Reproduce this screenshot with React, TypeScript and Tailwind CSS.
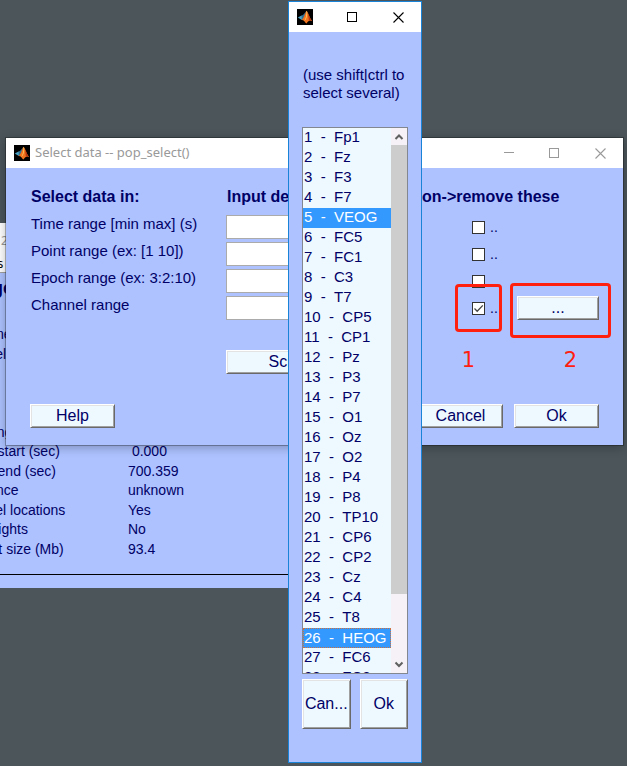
import React from "react";

const CHANNELS = [
  "Fp1", "Fz", "F3", "F7", "VEOG", "FC5", "FC1", "C3", "T7", "CP5", "CP1", "Pz", "P3", "P7",
  "O1", "Oz", "O2", "P4", "P8", "TP10", "CP6", "CP2", "Cz", "C4", "T8", "HEOG", "FC6", "FC2",
];

const INFO: [string, string][] = [
  ["Filename", ""],
  ["Channels per frame", ""],
  ["\u00a0", ""],
  ["\u00a0", ""],
  ["\u00a0", ""],
  ["Sampling rate (Hz)", ""],
  ["Epoch start (sec)", "\u00a00.000"],
  ["Epoch end (sec)", "700.359"],
  ["Reference", "unknown"],
  ["Channel locations", "Yes"],
  ["ICA weights", "No"],
  ["Dataset size (Mb)", "93.4"],
];

const RANGES = [
  "Time range [min max] (s)",
  "Point range (ex: [1 10])",
  "Epoch range (ex: 3:2:10)",
  "Channel range",
];

function MatlabIcon() {
  return (
    <svg viewBox="0 0 16 16" className="size-4 shrink-0" aria-hidden="true">
      <rect width="16" height="16" fill="#000" />
      <path d="M0.8 8.4 L4.6 6.6 L6.4 8.2 L4.8 11 Z" fill="#4aa3c4" />
      <path d="M4.6 6.6 C6.5 6 7.5 4 9 2.4 L7.6 8 L4.8 11 Z" fill="#2f6f92" />
      <path d="M4.4 11 C6.6 10 7.8 5 9.4 1.8 C11.4 3.4 12.6 9 15.2 12.2 C13 10.8 11.6 11.4 9.6 14.4 C8.6 14.2 7.8 13.2 7.2 12 C6.4 11 5.4 11 4.4 11 Z" fill="#f0731f" />
      <path d="M9.4 1.8 C9.8 6 8.8 9.6 7.2 12 C9.2 10.8 10.4 7.4 10.2 3 Z" fill="#ffd168" />
      <path d="M10.4 3 C11.6 5.6 12.8 9.6 15.2 12.2 C13.6 11.2 12.8 11 11.8 11.8 C11.8 8.6 11.2 5.6 10.4 3 Z" fill="#b5330f" />
    </svg>
  );
}

function Maximize() {
  return (
    <button type="button" aria-label="Maximize" className="size-[11px]">
      <svg viewBox="0 0 11 11" className="size-[11px]" fill="none" stroke="currentColor" shapeRendering="crispEdges">
        <rect x="0.5" y="0.5" width="9" height="9" />
      </svg>
    </button>
  );
}

function Close() {
  return (
    <button type="button" aria-label="Close" className="size-[11px]">
      <svg viewBox="0 0 11 11" className="size-[11px]" fill="none" stroke="currentColor" strokeWidth="1.1">
        <path d="M0.5 0.5 L10.5 10.5 M10.5 0.5 L0.5 10.5" />
      </svg>
    </button>
  );
}

function PushButton({ className, children }: { className: string; children: React.ReactNode }) {
  return (
    <button
      type="button"
      className={
        "border border-t-white border-l-white border-r-[#696969] border-b-[#696969] bg-[#eef8ff] text-base leading-[18px] whitespace-nowrap shadow-[inset_1px_1px_0_#e3e3e3,inset_-1px_-1px_0_#a0a0a0] " +
        className
      }
    >
      {children}
    </button>
  );
}

function Tick({ label, checked }: { label: string; checked: boolean }) {
  return (
    <label className="flex h-6 items-center gap-[5px] pl-[50px] text-sm leading-[18px]">
      <span className="relative grid size-[13px]">
        <input
          type="checkbox"
          aria-label={label}
          defaultChecked={checked}
          className="peer size-[13px] appearance-none border border-[#333] bg-white"
        />
        <svg viewBox="0 0 13 13" className="pointer-events-none absolute inset-0 hidden size-[13px] peer-checked:block" fill="none" stroke="#444" strokeWidth="1.3">
          <path d="M2.5 6.5 L5.2 9.2 L10.8 3.4" />
        </svg>
      </span>
      ..
    </label>
  );
}

function DatasetWindow() {
  return (
    <section className="absolute top-[223px] -left-[60px] h-[365px] w-[400px] bg-[#adc2ff] pb-[13px]">
      <div className="flex h-full flex-col">
        <header className="h-[34px] bg-white pt-[9px] pl-[61px] font-['Noto_Sans',sans-serif] text-xs leading-[18px] text-[#999]">2</header>
        <nav className="h-4 border-b border-[#a0a0a0] bg-white pl-[14px] font-['Noto_Sans',sans-serif] text-xs leading-[14px] text-black">
          <a href="#datasets">Datasets</a>
        </nav>
        <h2 className="pt-[3px] pl-[52px] text-lg leading-6 font-bold">ge</h2>
        <dl className="mt-[25px] flex h-[233px] flex-col justify-between text-sm leading-[18px]">
          {INFO.map(([name, value], i) => (
            <div key={i} className="grid grid-cols-[174px_1fr] pl-[14px]">
              <dt>{name}</dt>
              <dd>{value}</dd>
            </div>
          ))}
        </dl>
        <hr className="mt-auto border-black" />
      </div>
    </section>
  );
}

function SelectDataWindow() {
  return (
    <section className="absolute top-[138px] right-1 left-[6px] bg-[#adc2ff] shadow-[0_0_0_1px_rgba(0,0,0,0.28),0_2px_10px_rgba(0,0,0,0.3)]">
      <header className="flex h-[30px] items-center bg-white pr-[17px] pl-2 text-[#999]">
        <MatlabIcon />
        <h1 className="ml-[5px] flex-1 font-['Noto_Sans',sans-serif] text-[13px]">Select data -- pop_select()</h1>
        <div className="flex gap-[35px]">
          <button type="button" aria-label="Minimize" className="size-[11px]">
            <svg viewBox="0 0 11 11" className="size-[11px]" stroke="currentColor" shapeRendering="crispEdges">
              <path d="M1 4.5 H11" />
            </svg>
          </button>
          <Maximize />
          <Close />
        </div>
      </header>
      <form className="pt-5 pr-6 pb-[17px] pl-6 text-[15px] leading-[18px]">
        <div className="grid grid-cols-[196px_1fr_95px_82px] gap-y-[3px]">
          <h2 className="h-6 pl-px text-base leading-[18px] font-bold">Select data in:</h2>
          <h2 className="pl-px text-base leading-[18px] font-bold whitespace-nowrap">Input desired range</h2>
          <h2 className="col-span-2 text-base leading-[18px] font-bold">on-&gt;remove these</h2>
          {RANGES.map((name, i) => (
            <React.Fragment key={name}>
              <label htmlFor={"range" + i} className="h-6 pl-px">{name}</label>
              <input id={"range" + i} type="text" className="mr-[14px] h-6 min-w-0 border border-[#ababab] bg-white px-1" />
              <Tick label={"Remove " + name} checked={i === 3} />
              {i === 3 ? <PushButton className="h-6">...</PushButton> : <span />}
            </React.Fragment>
          ))}
        </div>
        <div className="mt-[30px] grid grid-cols-[196px_1fr_177px]">
          <PushButton className="col-start-2 mr-[14px] h-6">Scroll dataset</PushButton>
        </div>
        <div className="mt-[30px] flex gap-[11px]">
          <PushButton className="mr-auto h-6 w-[85px]">Help</PushButton>
          <PushButton className="h-6 w-[85px]">Cancel</PushButton>
          <PushButton className="h-6 w-[85px]">Ok</PushButton>
        </div>
      </form>
      <div className="absolute top-[146px] right-[121px] h-[48px] w-[47px] rounded-sm border-3 border-[#ff2010]" />
      <div className="absolute top-[145px] right-[12px] h-[55px] w-[101px] rounded-sm border-3 border-[#ff2010]" />
      <span className="absolute top-[210px] right-[148px] font-['DejaVu_Sans',sans-serif] text-[21px] leading-6 text-[#ff2010]">1</span>
      <span className="absolute top-[210px] right-[46px] font-['DejaVu_Sans',sans-serif] text-[21px] leading-6 text-[#ff2010]">2</span>
    </section>
  );
}

function ChannelWindow() {
  return (
    <section className="absolute top-px left-[288px] w-[134px] border border-[#1883d7] bg-[#adc2ff]">
      <header className="flex h-[30px] items-center bg-white pr-[17px] pl-2 text-black">
        <MatlabIcon />
        <div className="ml-auto flex gap-[35px]">
          <Maximize />
          <Close />
        </div>
      </header>
      <div className="px-[13px] pt-[34px] pb-[33px]">
        <label htmlFor="channels" className="block pl-px text-[15px] leading-[18px] whitespace-nowrap">
          (use shift|ctrl to
          <br />
          select several)
        </label>
        <div className="mt-[25px] flex h-[547px] border border-[#828790] bg-[#eef8ff]">
          <select
            id="channels"
            multiple
            defaultValue={["VEOG", "HEOG"]}
            className="h-full min-w-0 flex-1 appearance-none overflow-hidden rounded-none border-0 bg-transparent p-0 text-[15px] outline-none [scrollbar-width:none]"
          >
            {CHANNELS.map((name, i) => (
              <option
                key={name}
                value={name}
                className={
                  "h-5 min-h-5 text-[#000066] checked:bg-[#3399ff] checked:bg-[linear-gradient(#3399ff,#3399ff)] checked:text-white! " +
                  (name === "HEOG" ? "border border-dotted! border-[#cc7040]! p-0" : "p-0 pl-px")
                }
              >
                {i + 1 + "\u00a0\u00a0-\u00a0\u00a0" + name}
              </option>
            ))}
          </select>
          <div aria-hidden="true" className="flex w-4 flex-col justify-between bg-[#f5f1f6] text-[#606060]">
            <svg viewBox="0 0 16 17" className="h-[17px] w-4" fill="none" stroke="currentColor" strokeWidth="2">
              <path d="M4.5 11 L8 7.5 L11.5 11" />
            </svg>
            <div className="mb-[62px] flex-1 bg-[#cdcdcd]" />
            <svg viewBox="0 0 16 17" className="h-[17px] w-4" fill="none" stroke="currentColor" strokeWidth="2">
              <path d="M4.5 6.5 L8 10 L11.5 6.5" />
            </svg>
          </div>
        </div>
        <div className="mt-[5px] grid grid-cols-2 gap-[9px]">
          <PushButton className="h-[50px]">Can...</PushButton>
          <PushButton className="h-[50px]">Ok</PushButton>
        </div>
      </div>
    </section>
  );
}

export default function App() {
  return (
    <main className="relative h-screen overflow-hidden bg-[#4b555a] font-['Liberation_Sans',Arial,sans-serif] text-[#000066]">
      <DatasetWindow />
      <SelectDataWindow />
      <ChannelWindow />
    </main>
  );
}
